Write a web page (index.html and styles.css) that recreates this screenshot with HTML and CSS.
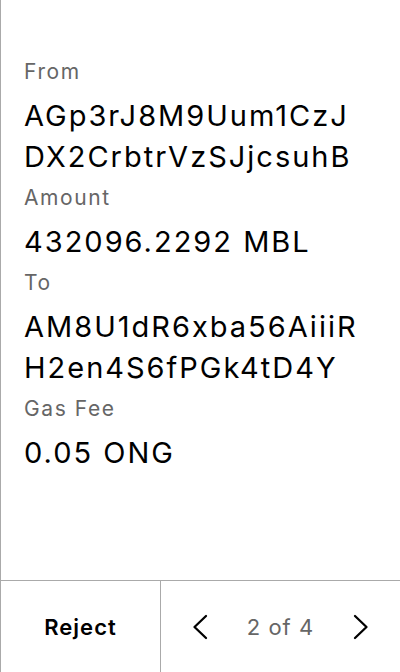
FILE: index.html
```html
<!DOCTYPE html>
<html>
<head>
<meta charset="utf-8">
<link rel="stylesheet" href="styles.css">
</head>
<body>
<div class="screen">
  <div class="details">
    <div class="field">
      <div class="label">From</div>
      <div class="value">AGp3rJ8M9Uum1CzJ<br>DX2CrbtrVzSJjcsuhB</div>
    </div>
    <div class="field">
      <div class="label">Amount</div>
      <div class="value">432096.2292 MBL</div>
    </div>
    <div class="field">
      <div class="label">To</div>
      <div class="value">AM8U1dR6xba56AiiiR<br>H2en4S6fPGk4tD4Y</div>
    </div>
    <div class="field">
      <div class="label">Gas Fee</div>
      <div class="value">0.05 ONG</div>
    </div>
  </div>
  <div class="footer">
    <div class="reject">Reject</div>
    <div class="pager">
      <svg class="chev" width="16" height="28" viewBox="0 0 16 28"><path d="M14 3 L2.5 14 L14 25" fill="none" stroke="#000" stroke-width="2.3" stroke-linecap="round" stroke-linejoin="round"/></svg>
      <span class="count">2 of 4</span>
      <svg class="chev" width="16" height="28" viewBox="0 0 16 28"><path d="M2 3 L13.5 14 L2 25" fill="none" stroke="#000" stroke-width="2.3" stroke-linecap="round" stroke-linejoin="round"/></svg>
    </div>
  </div>
</div>
</body>
</html>
```
FILE: styles.css
```css
html, body {
  margin: 0;
  padding: 0;
  background: #fff;
}
body {
  font-family: Inter, "Noto Sans", sans-serif;
  color: #000;
}
.screen {
  width: 400px;
  height: 672px;
  box-sizing: border-box;
  border-left: 1px solid #aaa;
  display: flex;
  flex-direction: column;
}
.details {
  flex: 1;
  padding: 60px 0 0 23px;
  display: flex;
  flex-direction: column;
  gap: 9px;
}
.label {
  font-size: 21px;
  line-height: 24px;
  color: #666;
  letter-spacing: 1.6px;
  margin-bottom: 11px;
}
.value {
  font-size: 29px;
  line-height: 41px;
  letter-spacing: 2px;
}
.footer {
  height: 91px;
  border-top: 1px solid #aaa;
  display: flex;
}
.reject {
  width: 159px;
  border-right: 1px solid #aaa;
  display: flex;
  align-items: center;
  justify-content: center;
  font-size: 22px;
  font-weight: 600;
  letter-spacing: 1px;
}
.pager {
  flex: 1;
  display: flex;
  align-items: center;
  justify-content: space-between;
  padding: 0 31px 0 31px;
}
.count {
  font-size: 22px;
  color: #666;
  letter-spacing: 1px;
}
.chev {
  display: block;
}
```
